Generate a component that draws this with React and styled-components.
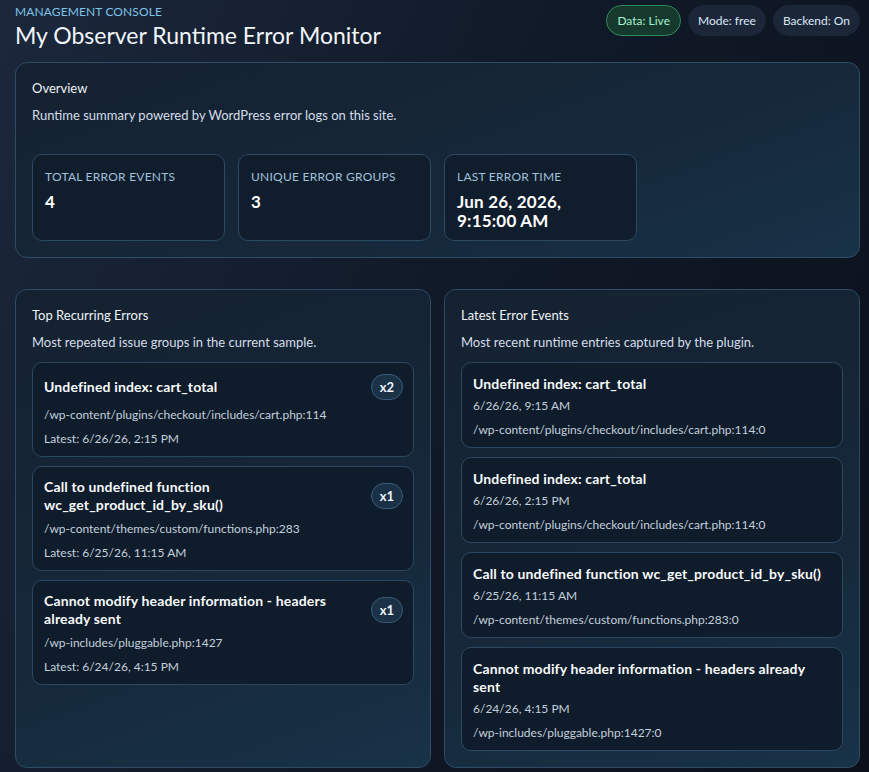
import React from "react";
import styled, { createGlobalStyle } from "styled-components";

const Global = createGlobalStyle`
  html, body { margin: 0; padding: 0; }
  body {
    background: #0c121d;
    font-family: "Lato", "Noto Sans", sans-serif;
    color: #e2e8f0;
  }
  * { box-sizing: border-box; }
`;

const Page = styled.div`
  min-height: 772px;
  padding: 4px 9px 4px 15px;
  background: linear-gradient(115deg, #1b273b 0%, #111a29 45%, #0b101a 100%);
`;

const Header = styled.header`
  display: flex;
  justify-content: space-between;
  align-items: flex-start;
`;

const Eyebrow = styled.div`
  font-size: 12px;
  line-height: 16px;
  letter-spacing: 0.01em;
  color: #7fc3e8;
  text-transform: uppercase;
`;

const Title = styled.h1`
  margin: 0;
  font-size: 23px;
  line-height: 30px;
  font-weight: 400;
  color: #f1f5f9;
`;

const Pills = styled.div`
  display: flex;
  gap: 7px;
  padding-top: 1px;
`;

const Pill = styled.span`
  display: inline-flex;
  align-items: center;
  height: 31px;
  padding: 0 ${(p) => (p.$live ? 10 : 9)}px;
  border-radius: 999px;
  font-size: 12px;
  border: 1px solid ${(p) => (p.$live ? "#2e8a5c" : "#1b2639")};
  background: ${(p) => (p.$live ? "#16392d" : "#1b2639")};
  color: ${(p) => (p.$live ? "#a9f0cf" : "#dbe7f5")};
`;

const Card = styled.section`
  border: 1px solid #2e4c66;
  border-radius: 12px;
  padding: 16px;
  background: linear-gradient(160deg, #142130 0%, #16283a 60%, #183247 100%);
`;

const OverviewCard = styled(Card)`
  margin-top: 12px;
`;

const CardTitle = styled.h2`
  margin: 0;
  font-size: 13px;
  line-height: 18px;
  font-weight: 400;
  color: #eef2f7;
`;

const CardSub = styled.p`
  margin: 9px 0 0;
  font-size: 13px;
  line-height: 18px;
  color: #d4dde8;
`;

const StatGrid = styled.div`
  display: grid;
  grid-template-columns: repeat(4, 1fr);
  gap: 13px;
  margin-top: 30px;
`;

const Stat = styled.div`
  border: 1px solid #2d4a63;
  border-radius: 10px;
  background: #101d2c;
  padding: 14px 12px 10px 12px;
  min-height: 87px;
`;

const StatLabel = styled.div`
  font-size: 12px;
  line-height: 16px;
  letter-spacing: 0.02em;
  text-transform: uppercase;
  color: #a2c0d8;
`;

const StatValue = styled.div`
  margin-top: 7px;
  font-size: 17px;
  line-height: 19px;
  font-weight: 700;
  letter-spacing: 0.2px;
  color: #ffffff;
`;

const Columns = styled.div`
  display: grid;
  grid-template-columns: 1fr 1fr;
  gap: 13px;
  margin-top: 31px;
  align-items: stretch;
`;

const List = styled.div`
  display: flex;
  flex-direction: column;
  gap: 9px;
  margin-top: 11px;
`;

const Item = styled.div`
  border: 1px solid #2c4860;
  border-radius: 10px;
  background: #0f1c2b;
  padding: ${(p) => (p.$compact ? "11px 10px 8px 11px" : "12px 11px 8px 11px")};
`;

const ItemHead = styled.div`
  display: flex;
  align-items: center;
  justify-content: space-between;
  gap: 12px;
`;

const ItemTitle = styled.div`
  font-size: 14px;
  line-height: 18px;
  font-weight: 700;
  letter-spacing: 0.15px;
  color: #f8fafc;
`;

const Badge = styled.span`
  flex: none;
  display: inline-flex;
  align-items: center;
  justify-content: center;
  height: 26px;
  min-width: 31px;
  padding: 0 8px;
  border-radius: 999px;
  border: 1px solid #3a5c7a;
  background: #1a3146;
  color: #eef4fb;
  font-size: 13px;
  font-weight: 700;
`;

const Meta = styled.div`
  margin-top: ${(p) => p.$gap || 6}px;
  font-size: 12px;
  line-height: 18px;
  color: #c3d0dd;
`;

const groups = [
  {
    title: "Undefined index: cart_total",
    count: "x2",
    path: "/wp-content/plugins/checkout/includes/cart.php:114",
    latest: "6/26/26, 2:15 PM",
  },
  {
    title: "Call to undefined function wc_get_product_id_by_sku()",
    count: "x1",
    path: "/wp-content/themes/custom/functions.php:283",
    latest: "6/25/26, 11:15 AM",
  },
  {
    title: "Cannot modify header information - headers already sent",
    count: "x1",
    path: "/wp-includes/pluggable.php:1427",
    latest: "6/24/26, 4:15 PM",
  },
];

const events = [
  {
    title: "Undefined index: cart_total",
    date: "6/26/26, 9:15 AM",
    path: "/wp-content/plugins/checkout/includes/cart.php:114:0",
  },
  {
    title: "Undefined index: cart_total",
    date: "6/26/26, 2:15 PM",
    path: "/wp-content/plugins/checkout/includes/cart.php:114:0",
  },
  {
    title: "Call to undefined function wc_get_product_id_by_sku()",
    date: "6/25/26, 11:15 AM",
    path: "/wp-content/themes/custom/functions.php:283:0",
  },
  {
    title: "Cannot modify header information - headers already sent",
    date: "6/24/26, 4:15 PM",
    path: "/wp-includes/pluggable.php:1427:0",
  },
];

export default function App() {
  return (
    <>
      <Global />
      <Page>
        <Header>
          <div>
            <Eyebrow>Management Console</Eyebrow>
            <Title>My Observer Runtime Error Monitor</Title>
          </div>
          <Pills>
            <Pill $live>Data: Live</Pill>
            <Pill>Mode: free</Pill>
            <Pill>Backend: On</Pill>
          </Pills>
        </Header>

        <OverviewCard>
          <CardTitle>Overview</CardTitle>
          <CardSub>Runtime summary powered by WordPress error logs on this site.</CardSub>
          <StatGrid>
            <Stat>
              <StatLabel>Total Error Events</StatLabel>
              <StatValue>4</StatValue>
            </Stat>
            <Stat>
              <StatLabel>Unique Error Groups</StatLabel>
              <StatValue>3</StatValue>
            </Stat>
            <Stat>
              <StatLabel>Last Error Time</StatLabel>
              <StatValue>
                Jun 26, 2026,
                <br />
                9:15:00 AM
              </StatValue>
            </Stat>
          </StatGrid>
        </OverviewCard>

        <Columns>
          <Card>
            <CardTitle>Top Recurring Errors</CardTitle>
            <CardSub>Most repeated issue groups in the current sample.</CardSub>
            <List>
              {groups.map((g) => (
                <Item key={g.title} $compact>
                  <ItemHead>
                    <ItemTitle>{g.title}</ItemTitle>
                    <Badge>{g.count}</Badge>
                  </ItemHead>
                  <Meta>{g.path}</Meta>
                  <Meta>Latest: {g.latest}</Meta>
                </Item>
              ))}
            </List>
          </Card>
          <Card>
            <CardTitle>Latest Error Events</CardTitle>
            <CardSub>Most recent runtime entries captured by the plugin.</CardSub>
            <List>
              {events.map((e, i) => (
                <Item key={i}>
                  <ItemTitle>{e.title}</ItemTitle>
                  <Meta $gap={4}>{e.date}</Meta>
                  <Meta>{e.path}</Meta>
                </Item>
              ))}
            </List>
          </Card>
        </Columns>
      </Page>
    </>
  );
}
